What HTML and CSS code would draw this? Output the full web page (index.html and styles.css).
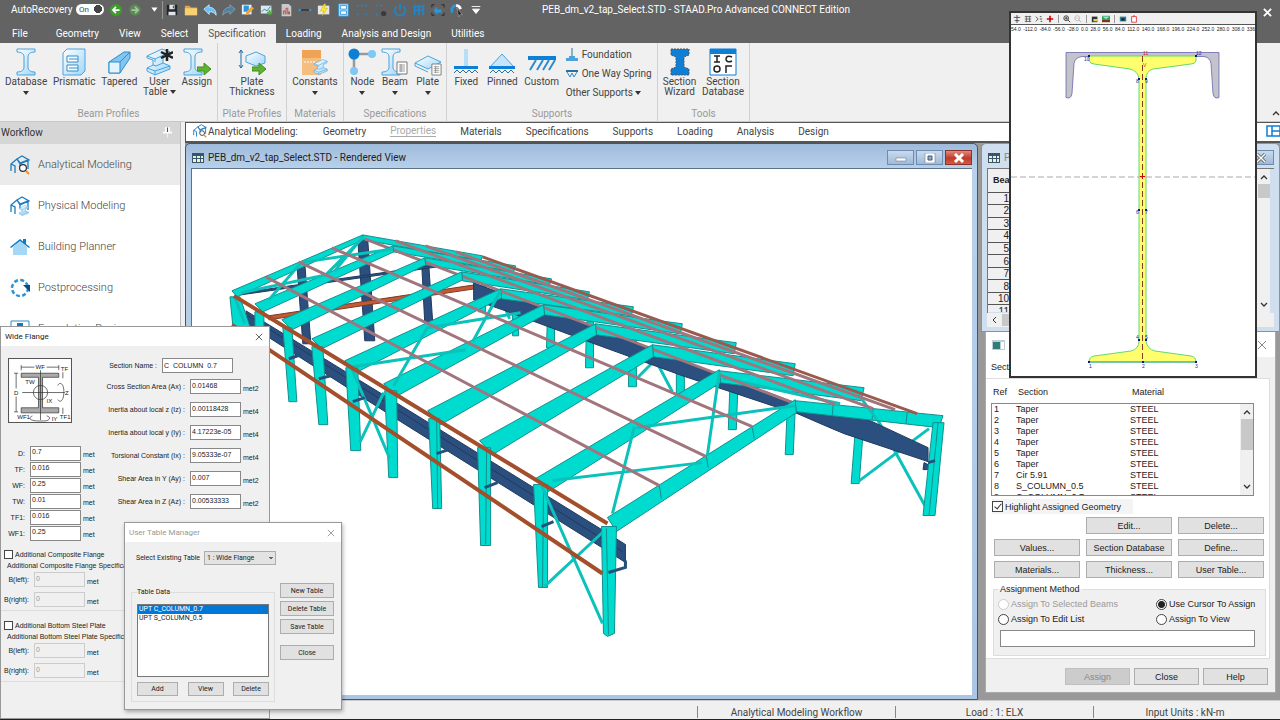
FILE: index.html
```html
<!DOCTYPE html>
<html lang="en">
<head>
    <meta charset="UTF-8">
    <meta name="viewport" content="width=device-width, initial-scale=1.0">
    <title>PEB_dm_v2_tap_Select.STD - STAAD.Pro Advanced CONNECT Edition</title>
    <link rel="stylesheet" href="styles.css">
</head>
<body>
<svg class="defs" width="0" height="0" aria-hidden="true">
    <defs>
        <linearGradient id="ice" x1="0" y1="0" x2="1" y2="1">
            <stop offset="0" stop-color="#ffffff"/><stop offset="1" stop-color="#9fd6f8"/>
        </linearGradient>
        <symbol id="i-beam" viewBox="0 0 28 28"><path d="M5 1h18v3c-5 0-7 2-7 5v10c0 3 2 5 7 5v3H5v-3c5 0 7-2 7-5V9c0-3-2-5-7-5z" fill="url(#ice)" stroke="#4aa3dc"/></symbol>
        <symbol id="i-isobeam" viewBox="0 0 28 28"><path d="M2 8L17 1l8 3-1 3-6 3v5l7 3v3L10 27l-8-4v-3l6-3v-5l-6-2z" fill="url(#ice)" stroke="#4aa3dc"/><path d="M2 8l8 3 15-7M10 11v3M8 17l3 1 7-3M2 20l8 3 15-5M10 23v4" fill="none" stroke="#4aa3dc"/></symbol>
        <symbol id="i-frame" viewBox="0 0 20 20"><path d="M1 16V9l6-5 3 4 8-3v9M7 4l5-3 7 4-9 4-3-5M1 9l4 2v7M10 9v3" fill="none" stroke="#1d7cc0" stroke-width="1.3"/></symbol>
        <symbol id="i-frame-find" viewBox="0 0 20 20"><use href="#i-frame"/><circle cx="13" cy="13" r="3.4" fill="#fff" stroke="#26313c" stroke-width="1.2"/><path d="M16 16l3 3" stroke="#f28c28" stroke-width="1.8"/></symbol>
        <symbol id="i-table" viewBox="0 0 12 10"><path d="M0 0h12v10H0z" fill="#35566e"/><path d="M1 3h3v2H1zM5 3h3v2H5zM9 3h2v2H9zM1 6h3v3H1zM5 6h3v3H5zM9 6h2v3H9z" fill="#f5efc0"/></symbol>
        <symbol id="i-sheet" viewBox="0 0 12 14"><path d="M1 1h10v12H1z" fill="#fff" stroke="#777"/><path d="M3 4h6M3 6h6M3 8h6M3 10h6M5 3v8" stroke="#777" stroke-width=".7"/></symbol>
        <symbol id="i-go" viewBox="0 0 14 12"><path d="M0 4h7V0l7 6-7 6V8H0z" fill="#5fb232" stroke="#3f8f1d"/></symbol>
        <symbol id="i-x" viewBox="0 0 10 10"><path d="M1 1l8 8M9 1L1 9" stroke="currentColor" fill="none"/></symbol>
        <symbol id="i-up" viewBox="0 0 8 6"><path d="M1 5l3-3 3 3" stroke="#333" stroke-width="1.3" fill="none"/></symbol>
        <symbol id="i-down" viewBox="0 0 8 6"><path d="M1 1l3 3 3-3" stroke="#333" stroke-width="1.3" fill="none"/></symbol>
    </defs>
</svg>

<div class="app">
    <header class="titlebar">
        <span class="recovery">AutoRecovery</span>
        <button class="toggle" type="button" aria-pressed="true">On</button>
        <div class="quick">
            <svg viewBox="0 0 16 16"><circle cx="8" cy="8" r="7" fill="#3e9c2a"/><path d="M12 8H5M8 4.500L4.500 8 8 11.500" stroke="#fff" stroke-width="2" fill="none"/></svg>
            <svg viewBox="0 0 16 16"><circle cx="8" cy="8" r="6.500" fill="#588c53"/><path d="M4 8h7M8 4.500L11.500 8 8 11.500" stroke="#aebfab" stroke-width="2" fill="none"/></svg>
            <svg viewBox="0 0 16 16"><path d="M5 5h7l-3.500 5z" fill="#fff"/></svg>
            <span class="sep"></span>
            <svg viewBox="0 0 16 16"><path d="M2 2h12v12H2z" fill="#23262b"/><path d="M5 2h6v5H5zM4 10h8v4H4z" fill="#dfe3e8"/><path d="M9 3h1v3H9z" fill="#23262b"/></svg>
            <svg viewBox="0 0 16 16"><path d="M1 3h5l2 2h7v9H1z" fill="#e0a63c"/><path d="M1 6h14v8H1z" fill="#f7cf74"/></svg>
            <svg viewBox="0 0 16 16"><path d="M1 7l6-5v3c5 0 8 3 8 9-2-3-4-4-8-4v3z" fill="#6cc0f5" stroke="#c8e8fb"/></svg>
            <svg viewBox="0 0 16 16"><path d="M15 7L9 2v3C4 5 1 8 1 14c2-3 4-4 8-4v3z" fill="#54809c" stroke="#7fa3b9"/></svg>
            <svg viewBox="0 0 16 16"><path d="M1 2h11v11H1z" fill="#e8f4fc"/><path d="M3 3h6v7H3z" fill="#2d94d8"/><path d="M6 10l6-6 3 2-7 7-3 1z" fill="#f0a33a"/></svg>
            <svg viewBox="0 0 16 16"><path d="M1 3h12v9H1z" fill="#dbe9f1"/><path d="M2 10l3-3 3 2 4-5" stroke="#2b6f9e" fill="none"/><path d="M8 11h6M11 8v6" stroke="#4bb536" stroke-width="2"/></svg>
            <svg viewBox="0 0 16 16"><path d="M3 1h8l3 3v11H3z" fill="#c9c9c9"/><path d="M5 13V9h2v4M8 13V6h2v7M11 13v-3h1v3" stroke="#b04a4a" fill="none"/></svg>
            <svg viewBox="0 0 16 16"><path d="M3 8h10" stroke="#111"/><circle cx="2" cy="8" r="1.500" fill="#2d94d8"/><circle cx="14" cy="8" r="1.500" fill="#2d94d8"/></svg>
            <svg viewBox="0 0 16 16"><path d="M1 3h13v10H1z" fill="#e6e6e6"/><path d="M8 1L4 9h4l-2 6 6-9H8l2-5z" fill="#ffe93b" stroke="#c9a400" stroke-width=".5"/></svg>
            <svg viewBox="0 0 16 16"><path d="M3 1h11v14H3z" fill="#c9e8fb" stroke="#2d94d8"/><path d="M5 3h7v4H5zM5 9h7v4H5z" fill="#fff" stroke="#2d94d8"/></svg>
            <svg viewBox="0 0 16 16"><path d="M2 3h2M7 3h2M12 3h2M2 13h2M12 13h2" stroke="#2d84bc" stroke-width="2"/></svg>
            <svg viewBox="0 0 16 16"><path d="M2 3h2M7 3h2M2 13h2" stroke="#2d84bc" stroke-width="2"/><circle cx="11" cy="12" r="3" fill="#3a3a3a"/></svg>
            <svg viewBox="0 0 16 16"><path d="M4 4a6 6 0 1 0 8 0M8 1v7" stroke="#2384c4" stroke-width="2" fill="none"/></svg>
            <svg viewBox="0 0 16 16"><path d="M3 2v12M8 2v12M13 2v12M2 4h12M2 8h12" stroke="#2384c4" stroke-width="2"/></svg>
            <svg viewBox="0 0 16 16"><path d="M1 5V2h3M12 2h3v3M1 11v3h3M12 14h3v-3" stroke="#222" fill="none"/><path d="M3 8l4-4v3h5v4H7v3z" fill="#2d94d8"/></svg>
            <svg viewBox="0 0 16 16"><path d="M3 11a5 5 0 0 1 4-8" fill="none" stroke="#2d94d8" stroke-width="3"/><path d="M7 3a5 5 0 0 1 5 4" fill="none" stroke="#fff" stroke-width="3"/><path d="M8 6l6 7-3 .5-1 3z" fill="#222" stroke="#ccc" stroke-width=".5"/></svg>
            <svg viewBox="0 0 16 16"><path d="M3 4h10M4 7h8l-4 5z" fill="#fff" stroke="#fff"/></svg>
        </div>
        <h1>PEB_dm_v2_tap_Select.STD - STAAD.Pro Advanced CONNECT Edition</h1>
        <button class="app-close" type="button" aria-label="Close"><svg viewBox="0 0 10 10"><path d="M1 1l8 8M9 1L1 9" stroke="#fff" stroke-width="2"/></svg></button>
    </header>

    <nav class="tabs">
        <a href="#">File</a>
        <a href="#">Geometry</a>
        <a href="#">View</a>
        <a href="#">Select</a>
        <a href="#" class="active">Specification</a>
        <a href="#">Loading</a>
        <a href="#">Analysis and Design</a>
        <a href="#">Utilities</a>
    </nav>

    <section class="ribbon">
        <div class="group g-beam">
            <div class="tools">
                <button type="button"><svg viewBox="0 0 28 28"><use href="#i-beam"/></svg>Database<i class="caret"></i></button>
                <button type="button"><svg viewBox="0 0 28 28"><path d="M3 5l4-4h18v22l-4 4H3z" fill="url(#ice)" stroke="#4aa3dc"/><path d="M7 8h11v6H7zM7 17h11v6H7zM9 11h9M9 20h9" fill="#fff" stroke="#2d8ccc"/></svg>Prismatic</button>
                <button type="button"><svg viewBox="0 0 28 28"><path d="M4 14L19 4h6v6L15 25H4z" fill="#7fc6f2" stroke="#2d8ccc"/><path d="M4 14h11v11H4z" fill="#e4f4fd" stroke="#2d8ccc"/><path d="M15 14L25 4" stroke="#2d8ccc"/></svg>Tapered</button>
                <button type="button"><svg viewBox="0 0 28 28"><use href="#i-isobeam"/><path d="M22 1v12M16 4l12 6M28 4l-12 6" stroke="#222" stroke-width="2.500"/></svg>User<br><span>Table <i class="caret"></i></span></button>
                <button type="button"><svg viewBox="0 0 28 28"><use href="#i-beam" x="-4"/><use href="#i-go" x="14" y="15" width="14" height="12"/></svg>Assign</button>
            </div>
            <h2>Beam Profiles</h2>
        </div>
        <div class="group g-plate">
            <div class="tools">
                <button type="button"><svg viewBox="0 0 28 28"><path d="M3 2v18M1 5l2-3 2 3M1 17l2 3 2-3" stroke="#1b6ca8" fill="none"/><path d="M8 8l10-4 9 4v7l-9 3-10-4z" fill="url(#ice)" stroke="#4aa3dc"/><use href="#i-go" x="14" y="15" width="14" height="12"/></svg>Plate<br>Thickness</button>
            </div>
            <h2>Plate Profiles</h2>
        </div>
        <div class="group g-mat">
            <div class="tools">
                <button type="button"><svg viewBox="0 0 28 28"><path d="M1 2h19v25H1z" fill="#f5bd7f"/><path d="M1 2h19v8H1z" fill="#f0a354"/><path d="M3 14h12" stroke="#fff" stroke-dasharray="2 1"/><use href="#i-isobeam" x="12" y="10" width="16" height="18"/></svg>Constants<i class="caret"></i></button>
            </div>
            <h2>Materials</h2>
        </div>
        <div class="group g-spec">
            <div class="tools">
                <button type="button"><svg viewBox="0 0 28 28"><path d="M6 6h18M6 6v18" stroke="#999" stroke-width="2.500"/><circle cx="6" cy="6" r="5.500" fill="#0d7fd6"/><circle cx="24" cy="6" r="4" fill="#7dc8f5"/><circle cx="6" cy="23" r="4" fill="#7dc8f5"/></svg>Node<i class="caret"></i></button>
                <button type="button"><svg viewBox="0 0 28 28"><use href="#i-beam" x="-4"/><use href="#i-sheet" x="15" y="13" width="12" height="14"/></svg>Beam<i class="caret"></i></button>
                <button type="button"><svg viewBox="0 0 28 28"><path d="M1 15l13-7 13 6-13 7z" fill="url(#ice)" stroke="#4aa3dc"/><path d="M1 15v3l13 6" fill="none" stroke="#4aa3dc"/><use href="#i-sheet" x="17" y="15" width="11" height="13"/></svg>Plate<i class="caret"></i></button>
            </div>
            <h2>Specifications</h2>
        </div>
        <div class="group g-sup">
            <div class="tools">
                <button type="button"><svg viewBox="0 0 28 28"><path d="M12 1h4v18h-4z" fill="#b5def7"/><path d="M2 18h24v3H2z" fill="#0d7fd6"/><path d="M2 25l3-3 3 3 3-3 3 3 3-3 3 3 3-3 3 3" fill="none" stroke="#2b6f9e"/></svg>Fixed</button>
                <button type="button"><svg viewBox="0 0 28 28"><path d="M14 6L2 19h24z" fill="#c5e6fa" stroke="#4aa3dc"/><path d="M1 18h26v3H1z" fill="#0d7fd6"/><path d="M2 25l3-3 3 3 3-3 3 3 3-3 3 3 3-3 3 3" fill="none" stroke="#2b6f9e"/></svg>Pinned</button>
                <button type="button"><svg viewBox="0 0 28 28"><path d="M0 8h28v4H0z" fill="#0d7fd6"/><path d="M8 12L2 22M15 12L9 22M21 12l-6 10M27 12l-6 10" stroke="#2d8ccc" stroke-width="2"/></svg>Custom</button>
                <div class="small-tools">
                    <button type="button"><svg viewBox="0 0 12 14"><path d="M6 0v9" stroke="#2b6f9e"/><path d="M3 8h6v2h3v3H0v-3h3z" fill="#4aa3dc"/></svg>Foundation</button>
                    <button type="button"><svg viewBox="0 0 12 14"><path d="M0 3h12v2H0z" fill="#2b6f9e"/><path d="M1 5l3 5 2-4 2 4 3-5" fill="none" stroke="#2d8ccc"/></svg>One Way Spring</button>
                    <button type="button"><span>Other Supports <i class="caret"></i></span></button>
                </div>
            </div>
            <h2>Supports</h2>
        </div>
        <div class="group g-tools">
            <div class="tools">
                <button type="button"><svg viewBox="0 0 28 28"><path d="M5 1h18v6l-5 2v10l5 2v6H5v-6l5-2V9L5 7z" fill="#0d7fd6" stroke="#555" stroke-dasharray="2 1"/></svg>Section<br>Wizard</button>
                <button type="button"><svg viewBox="0 0 28 28"><path d="M1 1h26v26H1z" fill="#fff" stroke="#0d7fd6"/><path d="M1 1h26v5H1z" fill="#0d7fd6"/><path d="M5 8h6M8 8v6M5 14h6M23 9c-4-2-6 0-6 2s2 4 6 2M17 25v-7h6" stroke="#222" stroke-width="1.500" fill="none"/><circle cx="8" cy="21" r="3" fill="none" stroke="#222" stroke-width="1.500"/></svg>Section<br>Database</button>
            </div>
            <h2>Tools</h2>
        </div>
        <svg class="collapse" viewBox="0 0 8 6"><use href="#i-up"/></svg>
    </section>

    <div class="body">
        <aside class="workflow">
            <h2>Workflow <svg viewBox="0 0 8 10"><path d="M2 1h4v4h2v1H0V5h2zM4 6v4" fill="#fff" stroke="#fff" stroke-width=".500"/><path d="M4 1v4" stroke="#555"/></svg></h2>
            <ul>
                <li class="active"><a href="#"><svg viewBox="0 0 20 20"><use href="#i-frame-find"/></svg>Analytical Modeling</a></li>
                <li><a href="#"><svg viewBox="0 0 20 20"><use href="#i-frame"/><use href="#i-isobeam" x="8" y="9" width="12" height="11"/></svg>Physical Modeling</a></li>
                <li><a href="#"><svg viewBox="0 0 20 20"><path d="M3 10l7-6 7 6v8H3z" fill="#a5d8f7"/><path d="M0 10l10-8 3 2.500V2h3v5l4 3-1 1-9-7-9 7z" fill="#0f7cc4"/></svg>Building Planner</a></li>
                <li><a href="#"><svg viewBox="0 0 20 20"><circle cx="10" cy="10" r="8" fill="none" stroke="#2d94d8" stroke-width="2.500" stroke-dasharray="4 2.280"/><path d="M13 7h7v7z" fill="#0b4a7d"/></svg>Postprocessing</a></li>
                <li><a href="#"><svg viewBox="0 0 20 20"><path d="M1 2h18v17H1z" fill="#fff" stroke="#2d8ccc"/><path d="M7 4h6v6H7z" fill="#0f7cc4"/></svg>Foundation Design</a></li>
            </ul>
        </aside>

        <main>
            <nav class="pages">
                <svg viewBox="0 0 20 20"><use href="#i-frame-find"/></svg>
                <strong>Analytical Modeling:</strong>
                <a href="#">Geometry</a>
                <a href="#" class="active">Properties</a>
                <a href="#">Materials</a>
                <a href="#">Specifications</a>
                <a href="#">Supports</a>
                <a href="#">Loading</a>
                <a href="#">Analysis</a>
                <a href="#">Design</a>
                <svg class="layout" viewBox="0 0 14 12"><path d="M1 1h13v10H1zM6 1v10M6 6h8" fill="none" stroke="#0d7fd6" stroke-width="1.500"/></svg>
            </nav>

            <div class="workspace">
                <section class="win render">
                    <header>
                        <svg class="doc" viewBox="0 0 12 10"><use href="#i-table"/></svg>
                        <h2>PEB_dm_v2_tap_Select.STD - Rendered View</h2>
                        <button type="button" aria-label="Minimize"><svg viewBox="0 0 12 10"><path d="M1 5h10v3H1z" fill="#fff" stroke="#556b80" stroke-width=".500"/></svg></button>
                        <button type="button" aria-label="Maximize"><svg viewBox="0 0 12 10"><path d="M1 0h10v10H1z" fill="#fff" stroke="#556b80" stroke-width=".500"/><path d="M4 3h4v4H4z" fill="#8fabc9" stroke="#44586c"/></svg></button>
                        <button type="button" class="red" aria-label="Close"><svg viewBox="0 0 12 10"><path d="M2 1l8 8M10 1L2 9" stroke="#fff" stroke-width="3"/></svg></button>
                    </header>
                    <div class="canvas">
                        <svg viewBox="191 169 781 525" preserveAspectRatio="xMinYMin meet">
                            <!-- gable columns and struts -->
                            <g class="navy">
                                <path d="M357 240h10l7 101h-10zM296 264h8l6 80h-8zM421 264h7l4 58h-8z"/>
                                <path d="M240 293L437 265v2L240 295z"/>
                            </g>
                            <path class="orange" d="M268 316L474 285v4L268 320z"/>
                            <!-- right hand wall -->
                            <g class="teal">
                                <path d="M478 286h7v26h-7zM512 298h6v38h-6zM547 310h7v38h-8zM586 322h7v46h-8zM629 340h7v47h-8zM676 360h8v40h-8zM730 376h8l-2 54h-8zM787 410h8l-2 45h-8zM856 420h8l-5 64h-8z"/>
                            </g>
                            <g class="brace">
                                <path d="M858 482l71-53M877 419l50 91M500 297l9 22M655 360l17 32M653 362l-17 17"/>
                            </g>
                            <path class="navy" d="M473 283l322 120 73 17 60 28v14l-84-28-12-5-37-16-23-7-90-30-80-29-100-37-29-10z"/>
                            <path class="navy" d="M924 463l6 3v4h-7z"/>
                            <g class="teal">
                                <path d="M362 235l120 21-2 5-117-21zM392 246l123 20-2 6-120-20zM424 258l127 21-2 6-124-20zM461 272l128 20-2 8-125-19zM500 289l133 18-2 9-130-17zM543 305l139 19-2 10-136-19zM595 324l141 19-2 11-138-19zM652 345l143 19-2 12-140-19zM719 371l145 17-3 13-141-18z"/>
                                <path d="M795 401l148 15-4 12-143-16z"/>
                                <path d="M833 405l-1 11M873 409l-1 11M907 413l-1 11"/>
                                <path d="M933 423h11l-9 93h-12z"/>
                                <path d="M938 423l-9 93"/>
                            </g>
                            <g class="brace">
                                <path d="M722 378l118 26M862 400l15 20"/>
                            </g>
                            <path class="brown" d="M482 257l435 157"/>
                            <g class="purlin">
                                <path d="M395 241l440 164M425 246l448 163M455 252l440 158M364 239L795 404"/>
                            </g>
                            <!-- crane girder along the near wall -->
                            <g class="navy">
                                <path d="M245 311l157 96 204 126 19 12v18l-22-14-203-127-152-97z"/>
                                <path d="M247 316l375 236"/>
                            </g>
                            <!-- rafters, back frame to front frame -->
                            <g class="teal">
                                <path d="M231 291l131-56v5l-126 57zM254 304l138-58 1 6-131 60zM281 320l143-62 1 7-134 65zM311 339l150-67 1 8-141 69zM344 361l156-72 1 9-146 75zM383 384l160-79 1 10-149 82zM427 411l168-87 1 11-156 90zM479 441l173-96 1 12-161 98zM535 479l184-109 1 13-172 109zM607 518l188-118 1 13-180 119z"/>
                                <path d="M659 486l2 13M706 457l2 11M752 428l2 11"/>
                            </g>
                            <!-- near wall columns -->
                            <g class="teal">
                                <path d="M229 297h10l10 30h-17zM254 312h9v15h-9zM282 328h9l5 74h-8zM311 347h11l5 78h-9zM345 368h12l3 83h-10zM384 391h12l1 87h-9zM428 419h11l2 90h-9zM477 448h13v98h-10zM533 485h14v103h-9zM601 527h15l-2 107-7 3-4-3z"/>
                                <path d="M606 529l2 106M543 487l-1 101M486 450l-1 95M436 421l1 88"/>
                            </g>
                            <g class="brace">
                                <path d="M268 300l33-38M240 293l85-18 38-38M298 263l94-14M334 271l28-34"/>
                                <path d="M352 367l113-17M393 386l34-59M427 328l93-15M472 342l28-51"/>
                                <path d="M552 481l150-18M612 514l22-87M636 428l159-22M707 456l12-84"/>
                                <path d="M541 486l61 138M544 587l58-54M351 369l38 90M383 393l-24 50M234 298l10 26"/>
                            </g>
                            <g class="clamp">
                                <path d="M288 359l12-4M318 379l12-3M352 402l12-4M436 454l12-4M484 488l13-5M541 527l12-5M608 573l17-5v-7M928 463l7-2"/>
                            </g>
                            <g class="purlin">
                                <path d="M265 277l394 209M298 262l408 195M331 248l421 179"/>
                            </g>
                            <g class="eave">
                                <path d="M233 296l374 228M231 325l371 249"/>
                            </g>
                        </svg>
                    </div>
                </section>

                <div class="side">
                    <section class="win beams">
                        <header>
                            <svg class="doc" viewBox="0 0 12 10"><use href="#i-table"/></svg>
                            <h2>PEB_dm_v2_tap_Select.STD - Beams</h2>
                            <button type="button" aria-label="Close window"><svg viewBox="0 0 12 10"><path d="M2 1l8 8M10 1L2 9" stroke="#555" stroke-width="3"/><path d="M2 1l8 8M10 1L2 9" stroke="#fff" stroke-width="1.500"/></svg></button>
                        </header>
                        <div class="grid-box">
                            <div class="grid-clip">
                                <table>
                                    <thead><tr><th>Beam</th><th></th></tr></thead>
                                    <tbody>
                                        <tr><td>1</td><td></td></tr>
                                        <tr><td>2</td><td></td></tr>
                                        <tr><td>3</td><td></td></tr>
                                        <tr><td>4</td><td></td></tr>
                                        <tr><td>5</td><td></td></tr>
                                        <tr><td>6</td><td></td></tr>
                                        <tr><td>7</td><td></td></tr>
                                        <tr><td>8</td><td></td></tr>
                                        <tr><td>10</td><td></td></tr>
                                        <tr><td>11</td><td></td></tr>
                                    </tbody>
                                </table>
                            </div>
                            <div class="vbar"><svg viewBox="0 0 8 6"><use href="#i-up"/></svg><span></span><svg viewBox="0 0 8 6"><use href="#i-down"/></svg></div>
                        </div>
                        <div class="hbar"><svg viewBox="0 0 6 8"><path d="M5 1L2 4l3 3" stroke="#333" fill="none"/></svg><span></span></div>
                    </section>

                    <section class="props">
                        <header>
                            <svg class="doc" viewBox="0 0 13 10"><path d="M0 0h13v10H0z" fill="#bcd0d4"/><path d="M1 2h7v7H1z" fill="#2f7d78"/><path d="M9 2h3v7H9z" fill="#fff"/></svg>
                            <button type="button" aria-label="Close properties"><svg viewBox="0 0 10 10"><use href="#i-x"/></svg></button>
                        </header>
                        <div class="tab">Section</div>
                        <div class="pane">
                            <div class="cols"><span>Ref</span><span>Section</span><span>Material</span></div>
                            <div class="list">
                                <table>
                                    <tr><td>1</td><td>Taper</td><td>STEEL</td></tr>
                                    <tr><td>2</td><td>Taper</td><td>STEEL</td></tr>
                                    <tr><td>3</td><td>Taper</td><td>STEEL</td></tr>
                                    <tr><td>4</td><td>Taper</td><td>STEEL</td></tr>
                                    <tr><td>5</td><td>Taper</td><td>STEEL</td></tr>
                                    <tr><td>6</td><td>Taper</td><td>STEEL</td></tr>
                                    <tr><td>7</td><td>Cir 5.91</td><td>STEEL</td></tr>
                                    <tr><td>8</td><td>S_COLUMN_0.5</td><td>STEEL</td></tr>
                                    <tr><td>9</td><td>C_COLUMN_0.7</td><td>STEEL</td></tr>
                                </table>
                                <div class="vbar"><svg viewBox="0 0 8 6"><use href="#i-up"/></svg><span></span><svg viewBox="0 0 8 6"><use href="#i-down"/></svg></div>
                            </div>
                            <label class="check"><input type="checkbox" checked>Highlight Assigned Geometry</label>
                            <div class="buttons">
                                <button type="button" class="second">Edit...</button>
                                <button type="button">Delete...</button>
                                <button type="button">Values...</button>
                                <button type="button">Section Database</button>
                                <button type="button">Define...</button>
                                <button type="button">Materials...</button>
                                <button type="button">Thickness...</button>
                                <button type="button">User Table...</button>
                            </div>
                            <fieldset>
                                <legend>Assignment Method</legend>
                                <label class="off"><input type="radio" name="method" disabled>Assign To Selected Beams</label>
                                <label><input type="radio" name="method" checked>Use Cursor To Assign</label>
                                <label><input type="radio" name="method">Assign To Edit List</label>
                                <label><input type="radio" name="method">Assign To View</label>
                                <input type="text" aria-label="Edit list">
                            </fieldset>
                        </div>
                        <footer>
                            <button type="button" disabled>Assign</button>
                            <button type="button">Close</button>
                            <button type="button">Help</button>
                        </footer>
                    </section>
                </div>
            </div>
        </main>
    </div>

    <footer class="status">
        <span>Analytical Modeling Workflow</span>
        <span>Load : 1: ELX</span>
        <span>Input Units : kN-m</span>
    </footer>

    <!-- floating windows -->
    <section class="section-view">
        <div class="bar">
            <svg viewBox="0 0 10 10"><path d="M1 3h8M5 0v10M2 7h6" stroke="#333"/></svg>
            <svg viewBox="0 0 10 10"><path d="M1 2h8M1 5h8M1 8h8M3 1v8M7 1v8" stroke="#555"/></svg>
            <svg viewBox="0 0 10 10"><path d="M1 2l3 3-3 3M6 5h3M6 2h2M7 8h2" stroke="#333" fill="none"/></svg>
            <svg viewBox="0 0 10 10"><path d="M1 5h8M5 1v8" stroke="#c00" stroke-width="2"/></svg>
            <i></i>
            <svg viewBox="0 0 10 10"><circle cx="4" cy="4" r="3" fill="#fff" stroke="#222"/><path d="M6 6l3 3M2 4h4M4 2v4" stroke="#222"/></svg>
            <svg viewBox="0 0 10 10"><circle cx="4" cy="4" r="3" fill="#fff" stroke="#aaa"/><path d="M6 6l3 3M2 4h4" stroke="#aaa"/></svg>
            <i></i>
            <svg viewBox="0 0 10 10"><path d="M1 2h7v7H1z" fill="#333"/><path d="M3 5h6v3H3z" fill="#e2d05a"/></svg>
            <svg viewBox="0 0 10 10"><path d="M0 1h10v5H0z" fill="#25a24a"/><path d="M0 2h10l-5 3z" fill="#9fe0ef"/><path d="M0 6h10v3H0z" fill="#8c2f22"/></svg>
            <i></i>
            <svg viewBox="0 0 10 10"><path d="M1 2h8v6H1z" fill="#2d7f9b"/><path d="M3 4h4v3H3z" fill="#222"/></svg>
            <svg viewBox="0 0 10 10"><path d="M2 2h6v7H2zM4 1h2" fill="#fff" stroke="#d22"/></svg>
        </div>
        <div class="ruler">
            <span>54.0</span><span>-112.0</span><span>-84.0</span><span>-56.0</span><span>-28.0</span><span>0.0</span><span>28.0</span><span>56.0</span><span>84.0</span><span>112.0</span><span>140.0</span><span>168.0</span><span>196.0</span><span>224.0</span><span>252.0</span><span>280.0</span><span>308.0</span><span>336</span>
        </div>
        <svg class="drawing" viewBox="1011 32 244 344">
            <path d="M1066 52.500h153v45q-5 2-6-4l-2-30q-1-6-7-7h-122q-7 1-8 7l-2 30q-1 6-6 4z" fill="#c3c3cb" stroke="#5a54a8" stroke-width=".700"/>
            <path d="M1089 56h107v5q-1 3-5 3l-38 5q-7 2-7 10v262q1 8 9 10l36 5q5 1 5 6h-107q0-5 5-6l37-5q8-2 8-10V79q-1-8-9-10l-36-5q-4 0-5-4z" fill="#ffff6e" stroke="#62d872" stroke-width="1"/>
            <path d="M1011 177h244" stroke="#aaa" stroke-dasharray="6 3"/>
            <path d="M1142.500 56v306" stroke="#8a3a1c" stroke-dasharray="6 3"/>
            <path d="M1140 176.500h5M1142.500 174v5" stroke="#c00"/>
            <path d="M1089 362h107" stroke="#3f9f9a"/>
            <path d="M1088 55h2v2h-2zM1195 55h2v2h-2zM1138 78h2v2h-2zM1145 78h2v2h-2zM1138 209h2v2h-2zM1145 209h2v2h-2zM1138 339h2v2h-2zM1145 339h2v2h-2zM1088 361h2v2h-2zM1142 361h2v2h-2zM1195 361h2v2h-2z" fill="#12128a"/>
            <g class="tags">
                <text x="1084" y="61">10</text><text x="1143" y="55" class="hot">11</text><text x="1196" y="55">12</text>
                <text x="1143" y="67" class="hot">V</text>
                <text x="1136" y="83">8</text><text x="1145" y="83">9</text>
                <text x="1136" y="214">6</text><text x="1145" y="214">7</text>
                <text x="1136" y="339">4</text><text x="1145" y="339">5</text>
                <text x="1089" y="368">1</text><text x="1142" y="368">2</text><text x="1195" y="368">3</text>
            </g>
        </svg>
    </section>

    <section class="dialog flange">
        <header><h2>Wide Flange</h2><button type="button" aria-label="Close wide flange"><svg viewBox="0 0 10 10"><use href="#i-x"/></svg></button></header>
        <div class="flange-top">
            <div class="dims">
                <svg class="diagram" viewBox="0 0 63 64">
                    <path d="M.5.5h62v63H.5z" fill="#fff" stroke="#555"/>
                    <path d="M13 15h37v4H34v30h16v5H13v-5h17V19H13z" fill="#aaa" stroke="#333" stroke-width=".700"/>
                    <path d="M13 9h13M38 9h12M13 7v5M50 7v5M8 15v15M8 38v15M6 15h4M6 53h4M54 14v6M54 49v6M14 34h42M32 12v49" stroke="#333" stroke-width=".700" fill="none"/>
                    <circle cx="32" cy="34" r="7" fill="none" stroke="#333" stroke-width=".700"/>
                    <path d="M49 27c2-4 6-2 6 6s-3 12-6 8M24 57c-6 3 0 5 6 5h6c5 0 7-4 2-5" fill="none" stroke="#333" stroke-width=".700"/>
                    <g><text x="27" y="11">WF</text><text x="52" y="13">TF</text><text x="17" y="26">TW</text><text x="6" y="36">D</text><text x="56" y="36">Z</text><text x="38" y="44">IX</text><text x="9" y="60">WF1</text><text x="43" y="62">IY</text><text x="51" y="60">TF1</text></g>
                </svg>
                <div class="row"><label for="d">D:</label><input id="d" type="text" value="0.7"><span>met</span></div>
                <div class="row"><label for="tf">TF:</label><input id="tf" type="text" value="0.016"><span>met</span></div>
                <div class="row"><label for="wf">WF:</label><input id="wf" type="text" value="0.25"><span>met</span></div>
                <div class="row"><label for="tw">TW:</label><input id="tw" type="text" value="0.01"><span>met</span></div>
                <div class="row"><label for="tf1">TF1:</label><input id="tf1" type="text" value="0.016"><span>met</span></div>
                <div class="row"><label for="wf1">WF1:</label><input id="wf1" type="text" value="0.25"><span>met</span></div>
            </div>
            <div class="values">
                <div class="row name"><label for="sn">Section Name :</label><input id="sn" type="text" value="C_COLUMN_0.7"></div>
                <div class="row"><label for="ax">Cross Section Area (Ax) :</label><input id="ax" type="text" value="0.01468"><span>met2</span></div>
                <div class="row"><label for="iz">Inertia about local z (Iz) :</label><input id="iz" type="text" value="0.00118428"><span>met4</span></div>
                <div class="row"><label for="iy">Inertia about local y (Iy) :</label><input id="iy" type="text" value="4.17223e-05"><span>met4</span></div>
                <div class="row"><label for="ix">Torsional Constant (Ix) :</label><input id="ix" type="text" value="9.05333e-07"><span>met4</span></div>
                <div class="row"><label for="ay">Shear Area in Y (Ay) :</label><input id="ay" type="text" value="0.007"><span>met2</span></div>
                <div class="row"><label for="az">Shear Area in Z (Az) :</label><input id="az" type="text" value="0.00533333"><span>met2</span></div>
            </div>
        </div>
        <div class="extra">
            <label class="check"><input type="checkbox">Additional Composite Flange</label>
            <p>Additional Composite Flange Specifications</p>
            <div class="row"><label for="cl">B(left):</label><input id="cl" type="text" value="0" disabled><span>met</span></div>
            <div class="row"><label for="cr">B(right):</label><input id="cr" type="text" value="0" disabled><span>met</span></div>
        </div>
        <div class="extra">
            <label class="check"><input type="checkbox">Additional Bottom Steel Plate</label>
            <p>Additional Bottom Steel Plate Specifications</p>
            <div class="row"><label for="bl">B(left):</label><input id="bl" type="text" value="0" disabled><span>met</span></div>
            <div class="row"><label for="br">B(right):</label><input id="br" type="text" value="0" disabled><span>met</span></div>
        </div>
    </section>

    <section class="dialog manager">
        <header><h2>User Table Manager</h2><button type="button" aria-label="Close table manager"><svg viewBox="0 0 10 10"><use href="#i-x"/></svg></button></header>
        <div class="pick"><label for="existing">Select Existing Table</label><select id="existing"><option>1 : Wide Flange</option></select></div>
        <div class="manager-main">
            <fieldset>
                <legend>Table Data</legend>
                <select size="8" aria-label="Table Data">
                    <option selected>UPT C_COLUMN_0.7</option>
                    <option>UPT S_COLUMN_0.5</option>
                </select>
                <div class="actions"><button type="button" class="wide">Add</button><button type="button">View</button><button type="button">Delete</button></div>
            </fieldset>
            <div class="stack">
                <button type="button">New Table</button>
                <button type="button">Delete Table</button>
                <button type="button">Save Table</button>
                <button type="button" class="last">Close</button>
            </div>
        </div>
    </section>
</div>
</body>
</html>
```
FILE: styles.css
```css
* {
    box-sizing: border-box;
}

body {
    margin: 0;
    font-family: Roboto, "Open Sans", sans-serif;
    font-size: 10px;
    color: #444;
    background: #f0f0f0;
}

h1, h2, p, ul {
    margin: 0;
    padding: 0;
    font-size: inherit;
    font-weight: 400;
}

ul {
    list-style: none;
}

a {
    color: inherit;
    text-decoration: none;
}

button, input, select {
    font: inherit;
    color: inherit;
    margin: 0;
    padding: 0;
    border-radius: 0;
}

.defs {
    position: absolute;
}

.app {
    position: relative;
    min-height: 100vh;
    display: flex;
    flex-direction: column;
    overflow: hidden;
}

/* title bar */
.titlebar {
    height: 22px;
    display: flex;
    align-items: center;
    padding: 0 8px 3px 11px;
    background: #636363;
    color: #fff;
}

.recovery {
    width: 65px;
}

.toggle {
    width: 28px;
    height: 11px;
    border: 0;
    border-radius: 6px;
    background: radial-gradient(circle at 22px 5px, #444 4px, #fff 4px);
    color: #444;
    font-size: 8px;
    line-height: 11px;
    text-align: left;
    padding-left: 3px;
}

.quick {
    display: flex;
    align-items: center;
    margin-left: 5px;
    gap: 5px;
}

.quick svg {
    width: 14px;
    height: 14px;
}

.quick .sep {
    width: 1px;
    height: 18px;
    background: #999;
    margin: 0 -3px 0 -4px;
}

.titlebar h1 {
    margin-left: 59px;
    white-space: nowrap;
}

.app-close {
    margin-left: auto;
    border: 0;
    background: none;
}

.app-close svg {
    display: block;
    width: 9px;
    height: 9px;
    margin-top: 5px;
}

.tabs {
    height: 21px;
    display: flex;
    align-items: flex-end;
    padding-left: 2px;
    background: #636363;
    color: #fff;
}

.tabs a {
    padding: 0 10px;
    line-height: 19px;
}

.tabs a:first-child {
    padding-right: 18px;
}

.tabs .active {
    background: #f0f0f0;
    color: #555;
}

/* ribbon */
.ribbon {
    height: 79px;
    display: flex;
    background: #f0f0f0;
    border-bottom: 1px solid #c9c9c9;
}

.group {
    display: flex;
    flex-direction: column;
    justify-content: space-between;
    border-right: 1px solid #d0d0d0;
    text-align: center;
}

.g-beam { width: 218px; }
.g-plate { width: 69px; }
.g-mat { width: 57px; }
.g-spec { width: 103px; }
.g-sup { width: 211px; }
.g-tools { width: 92px; }

.group h2 {
    color: #999;
    line-height: 15px;
}

.tools {
    display: flex;
    justify-content: space-around;
    padding: 5px 2px 0;
}

.g-beam .tools {
    justify-content: space-between;
    padding: 5px 5px 0;
}

.tools button {
    display: flex;
    flex-direction: column;
    align-items: center;
    border: 0;
    background: none;
    line-height: 10px;
}

.tools svg {
    width: 28px;
    height: 28px;
    margin-bottom: 1px;
}

.caret {
    display: inline-block;
    border: 3px solid transparent;
    border-top: 4px solid #333;
    border-bottom: 0;
    margin: 1px 0;
}

button > .caret {
    margin-top: 4px;
}

.small-tools {
    display: flex;
    flex-direction: column;
    gap: 5px;
}

.tools .small-tools button {
    flex-direction: row;
    gap: 4px;
    line-height: 14px;
}

.small-tools svg {
    width: 12px;
    height: 14px;
    margin: 0;
}

.collapse {
    width: 8px;
    margin: 66px 0 0 auto;
    height: 8px;
}

/* body */
.body {
    flex: 1;
    display: flex;
}

.workflow {
    width: 181px;
    background: #fff;
    border-right: 1px solid #bbb;
}

.workflow h2 {
    display: flex;
    justify-content: space-between;
    padding: 0 8px 0 1px;
    line-height: 22px;
    background: #d6d6d6;
    color: #333;
}

.workflow h2 svg {
    width: 9px;
}

.workflow a {
    display: flex;
    align-items: center;
    gap: 8px;
    height: 41px;
    padding-left: 10px;
    font-size: 11px;
    font-weight: 300;
}

.workflow svg {
    width: 20px;
    height: 20px;
}

.workflow .active {
    background: #ebebeb;
}

main {
    flex: 1;
    min-width: 0;
    margin-left: 4px;
    display: flex;
    flex-direction: column;
}

.pages {
    height: 21px;
    display: flex;
    align-items: center;
    gap: 24px;
    padding: 0 0 2px 7px;
    background: #fff;
    border: solid #555;
    border-width: 1px 0 2px 1px;
}

.pages svg {
    width: 14px;
    height: 14px;
    margin-right: -23px;
}

.pages strong {
    font-weight: 400;
    margin-right: 1px;
}

.pages .active {
    color: #aaa;
    border-bottom: 1px solid #aaa;
}

.pages .layout {
    margin: 0 0 0 auto;
}

.workspace {
    flex: 1;
    display: grid;
    grid-template-columns: 1fr 299px;
    gap: 3px;
    background: #999;
}

/* document windows */
.win {
    display: flex;
    flex-direction: column;
    background: linear-gradient(#9fbbdc, #b9d1ea 25px, #abc6e4);
    border: 1px solid #46546a;
    border-radius: 5px 5px 0 0;
    padding: 0 5px 4px;
}

.win header {
    height: 24px;
    display: flex;
    align-items: center;
    gap: 2px;
    padding-top: 3px;
}

.win .doc {
    width: 12px;
    height: 10px;
    margin: 0 2px 0 1px;
}

.win h2 {
    flex: 1;
    color: #222;
    white-space: nowrap;
    overflow: hidden;
}

.win header button {
    width: 27px;
    height: 15px;
    border: 1px solid #6f8cae;
    background: linear-gradient(#c9dbee, #9ebad9);
    display: flex;
    align-items: center;
    justify-content: center;
}

.win header button svg {
    width: 12px;
    height: 10px;
}

.win header .red {
    background: linear-gradient(#e08a7c, #c03a2b 55%, #d25b45);
    border-color: #8a3328;
}

.canvas {
    flex: 1;
    background: #fff;
    border-top: 1px solid #5d738c;
    border-left: 1px solid #5d738c;
    min-height: 0;
    overflow: hidden;
}

.canvas svg {
    display: block;
    width: 100%;
}

.teal path {
    fill: #00dbd0;
    stroke: #128f8d;
    stroke-width: 1;
}

.navy, .navy path {
    fill: #2b4f7e;
    stroke: #203a5f;
    stroke-width: 1;
}

.orange {
    fill: #c45a35;
    stroke: #7c3b22;
}

.brown {
    fill: none;
    stroke: #9a5a50;
    stroke-width: 3;
}

.purlin path {
    fill: none;
    stroke: #a0757d;
    stroke-width: 3;
}

.brace path {
    fill: none;
    stroke: #0bc2bb;
    stroke-width: 3;
}

.clamp path {
    fill: none;
    stroke: #24507c;
    stroke-width: 3;
}

.eave path {
    fill: none;
    stroke: #a34f2c;
    stroke-width: 4;
}

.side {
    display: flex;
    flex-direction: column;
    min-width: 0;
}

.beams {
    height: 189px;
    background: #cfdff0;
    border-color: #8793a3;
}

.beams h2 {
    color: #888;
}

.beams header {
    padding-right: 0;
}

.grid-box {
    flex: 1;
    min-height: 0;
    display: flex;
    padding-right: 4px;
    border-top: 1px solid #777;
    border-left: 1px solid #777;
}

.grid-clip {
    flex: 1;
    height: 143px;
    overflow: hidden;
}

.beams table {
    width: 100%;
    height: 149px;
    table-layout: fixed;
    border-collapse: collapse;
    font: 10px "Liberation Sans", Arial, sans-serif;
    color: #222;
}

.beams th, .beams td {
    padding: 0;
    border-bottom: 1px solid #555;
    line-height: 11px;
    background: #f0f0f0;
}

.beams th {
    height: 23px;
    text-align: left;
    font-size: 9px;
}

.beams th:first-child {
    width: 21px;
    padding-left: 5px;
}

.beams td:first-child {
    text-align: right;
}

.beams td:last-child {
    background: #ffffc4;
    border-color: #d5d59c;
}

.vbar {
    width: 13px;
    display: flex;
    flex-direction: column;
    align-items: center;
    padding: 5px 0;
    background: #f0f0f0;
}

.vbar svg {
    width: 8px;
    height: 6px;
}

.vbar span {
    width: 12px;
    height: 14px;
    margin: 4px 0 auto;
    background: #c8c8c8;
}

.hbar {
    height: 14px;
    display: flex;
    align-items: center;
    gap: 5px;
    padding-left: 4px;
    background: #f0f0f0;
}

.hbar svg {
    width: 6px;
    height: 8px;
}

.hbar span {
    width: 120px;
    height: 12px;
    background: #c8c8c8;
}

/* properties dialog */
.props {
    margin: 0 4px 0 4px;
    background: #f0f0f0;
    font: 9px "Liberation Sans", Arial, sans-serif;
    color: #222;
    border: 1px solid #aaa;
    border-top: 0;
}

.props header {
    height: 25px;
    display: flex;
    align-items: center;
    justify-content: space-between;
    padding: 0 8px 0 6px;
    background: #fff;
}

.props .doc {
    width: 13px;
    height: 10px;
}

.props header button {
    border: 0;
    background: none;
    color: #888;
}

.props header button svg {
    display: block;
    width: 10px;
    height: 10px;
}

.tab {
    width: 60px;
    padding-left: 5px;
    line-height: 21px;
    background: #fff;
}

.pane {
    margin-right: 5px;
    padding: 6px 2px 2px 5px;
    background: #fff;
    border: solid #ddd;
    border-width: 1px 1px 1px 0;
}

.cols {
    display: grid;
    grid-template-columns: 25px 114px 1fr;
    padding-left: 2px;
    line-height: 14px;
    margin-bottom: 4px;
}

.list {
    display: flex;
    height: 93px;
    width: 263px;
    overflow: hidden;
    border: 1px solid #888;
}

.list table {
    flex: 1;
    border-collapse: collapse;
    align-self: flex-start;
}

.list td {
    padding: 0;
    line-height: 11px;
}

.list td:nth-child(1) { width: 24px; padding-left: 2px; }
.list td:nth-child(2) { width: 114px; }

.list .vbar span {
    height: 31px;
}

.check {
    display: flex;
    align-items: center;
    gap: 2px;
}

.props .check {
    width: 141px;
    height: 15px;
    margin: 3px 0 3px 1px;
    background: #f4f4f4;
}

input[type="checkbox"] {
    appearance: none;
    width: 11px;
    height: 11px;
    border: 1px solid #444;
    background: #fff;
}

input[type="checkbox"]:checked::after {
    content: "";
    display: block;
    width: 3px;
    height: 6px;
    margin: 0 0 0 3px;
    border: solid #333;
    border-width: 0 1px 1px 0;
    transform: rotate(40deg);
}

.buttons {
    display: grid;
    grid-template-columns: repeat(3, 86px);
    gap: 5px 6px;
    margin-left: 3px;
}

.buttons .second {
    grid-column: 2;
}

.props .buttons button, .props footer button, .manager .stack button, .actions button {
    height: 17px;
    border: 1px solid #adadad;
    background: #e1e1e1;
}

.props fieldset {
    display: grid;
    grid-template-columns: 158px 1fr;
    gap: 3px 0;
    margin: 5px 2px 0 2px;
    padding: 3px 10px 8px 4px;
    border: 1px solid #ddd;
    background: #f0f0f0;
}

.props legend {
    padding: 0 2px;
    line-height: 12px;
}

.props fieldset label {
    display: flex;
    align-items: center;
    gap: 2px;
    height: 12px;
    white-space: nowrap;
}

.off {
    color: #999;
}

input[type="radio"] {
    appearance: none;
    width: 11px;
    height: 11px;
    border: 1px solid #444;
    border-radius: 50%;
    background: #fff;
}

input[type="radio"]:checked {
    background: radial-gradient(circle, #222 3px, #fff 4px);
}

input[type="radio"]:disabled {
    border-color: #ccc;
}

.props input[type="text"] {
    grid-column: 1 / 3;
    height: 17px;
    margin: 2px 0 0 2px;
    border: 1px solid #888;
}

.props footer {
    display: flex;
    justify-content: flex-end;
    gap: 4px;
    padding: 9px 7px 7px;
}

.props footer button {
    width: 65px;
}

.props footer button:disabled {
    background: #ccc;
    border-color: #bfbfbf;
    color: #888;
}

.status {
    height: 20px;
    display: flex;
    justify-content: flex-end;
    background: #f0f0f0;
    border-bottom: 1px solid #222;
    border-top: 1px solid #ccc;
}

.status span {
    width: 198px;
    margin: 5px 0 1px;
    line-height: 14px;
    border-left: 1px solid #888;
    text-align: center;
}

.status span:last-child {
    width: 187px;
    padding-right: 4px;
}

/* section viewer */
.section-view {
    position: absolute;
    top: 11px;
    right: 23px;
    width: 248px;
    border: 2px solid #333;
    background: #fff;
}

.bar {
    height: 11px;
    display: flex;
    align-items: center;
    gap: 3px;
    padding-left: 2px;
    background: #f0f0f0;
}

.bar svg {
    width: 8px;
    height: 8px;
}

.bar i {
    width: 1px;
    height: 8px;
    background: #999;
    margin: 0 1px;
}

.ruler {
    height: 8px;
    display: flex;
    justify-content: space-between;
    overflow: hidden;
    border-top: 1px solid #555;
    font: 5px "Liberation Sans", Arial, sans-serif;
    line-height: 8px;
    color: #222;
}

.drawing {
    display: block;
    width: 100%;
}

.tags text {
    font: 5px "Liberation Sans", Arial, sans-serif;
    fill: #2323b0;
}

.tags .hot {
    fill: #d01c3c;
}

/* small dialogs */
.dialog {
    position: absolute;
    background: #f0f0f0;
    border: 1px solid #999;
    font-size: 7px;
    color: #222;
}

.dialog header {
    display: flex;
    align-items: center;
    justify-content: space-between;
    height: 19px;
    padding: 0 6px 0 4px;
    background: #fff;
    font-size: 8px;
}

.dialog header button {
    border: 0;
    background: none;
    color: #444;
}

.dialog header svg {
    display: block;
    width: 8px;
    height: 8px;
}

.flange {
    left: 0;
    bottom: 1px;
    width: 270px;
    height: 393px;
    font-family: "Liberation Sans", Arial, sans-serif;
}

.flange header {
    font-family: Roboto, "Open Sans", sans-serif;
}

.flange-top {
    display: flex;
    padding-top: 12px;
}

.dims {
    width: 97px;
    display: flex;
    flex-direction: column;
    gap: 2px;
}

.diagram {
    width: 64px;
    height: 65px;
    margin: 0 0 21px 7px;
}

.diagram text {
    font: 6px "Liberation Sans", Arial, sans-serif;
    fill: #222;
}

.row {
    display: flex;
    align-items: center;
    gap: 2px;
}

.row label {
    text-align: right;
    margin-right: 3px;
    white-space: nowrap;
}

.row input {
    width: 51px;
    height: 15px;
    padding: 0 0 3px 1px;
    border: 1px solid #888;
    background: #fff;
}

.row input:disabled {
    background: #f0f0f0;
    border-color: #ccc;
    color: #999;
}

.row span {
    padding-top: 3px;
}

.dims .row {
    height: 14px;
}

.dims label {
    width: 24px;
}

.values {
    flex: 1;
    display: flex;
    flex-direction: column;
    gap: 8px;
}

.values label {
    width: 87px;
}

.values .name label {
    width: 59px;
}

.values .name {
    margin-bottom: -2px;
}

.values .name input {
    width: 71px;
    padding-bottom: 1px;
}

.extra {
    display: flex;
    flex-direction: column;
    width: 125px;
    margin-top: 8px;
    padding-bottom: 3px;
    overflow: hidden;
    border-bottom: 1px solid #ddd;
}

.extra .check {
    height: 12px;
    padding-left: 3px;
}

.extra .check input {
    width: 9px;
    height: 9px;
}

.extra p {
    padding-left: 6px;
    line-height: 12px;
    white-space: nowrap;
}

.extra .row + .row {
    margin-top: 5px;
}

.extra label:not(.check) {
    width: 28px;
}

.manager {
    left: 124px;
    bottom: 10px;
    width: 218px;
    height: 188px;
    box-shadow: 1px 2px 4px rgba(0, 0, 0, 0.3);
}

.manager header {
    color: #999;
}

.manager header button {
    color: #888;
}

.pick {
    display: flex;
    align-items: center;
    gap: 3px;
    padding: 9px 0 0 11px;
}

.pick label {
    width: 65px;
    white-space: nowrap;
}

.pick select {
    width: 72px;
    height: 14px;
    padding: 0 2px;
    appearance: none;
    border: 1px solid #adadad;
    background: #e3e3e3;
    background-image: linear-gradient(45deg, transparent 50%, #666 50%), linear-gradient(-45deg, transparent 50%, #666 50%);
    background-size: 3px 3px;
    background-position: 63px 5px, 66px 5px;
    background-repeat: no-repeat;
}

.manager-main {
    display: flex;
    gap: 5px;
    margin: 18px 7px 0 6px;
}

.manager fieldset {
    width: 144px;
    margin: 5px 0 0;
    padding: 7px 5px 5px;
    border: 1px solid #ddd;
}

.manager legend {
    padding: 0;
    line-height: 9px;
}

.manager fieldset select {
    display: block;
    width: 100%;
    height: 73px;
    overflow: hidden;
    border: 1px solid #777;
    background: #fff;
    outline: 0;
}

.manager option {
    padding: 0 1px;
    min-height: 9px;
    line-height: 9px;
}

.manager fieldset option:checked {
    background: #0078d7 linear-gradient(#0078d7, #0078d7);
    color: #fff;
}

.actions {
    display: flex;
    justify-content: space-between;
    margin-top: 5px;
}

.manager .actions button {
    width: 36px;
    height: 14px;
}

.manager .actions .wide {
    width: 41px;
}

.stack {
    flex: 1;
    display: flex;
    flex-direction: column;
    gap: 3px;
}

.manager .stack button {
    height: 15px;
}

.stack .last {
    margin-top: 8px;
}
```
